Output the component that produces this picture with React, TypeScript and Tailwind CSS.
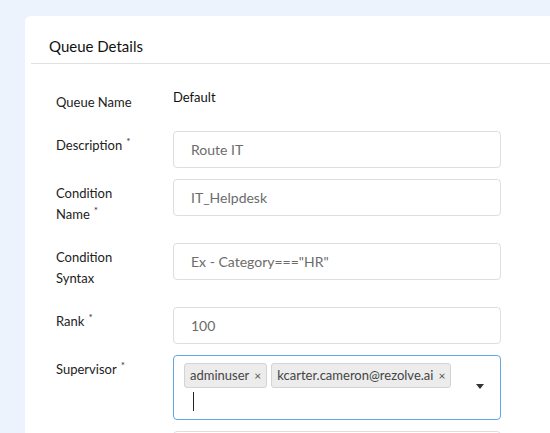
import React from "react";

const font = { fontFamily: "Lato, 'Open Sans', sans-serif" };

function Label({ text, required }: { text: React.ReactNode; required?: boolean }) {
  return (
    <div className="w-[117px] shrink-0 pt-[4px] pb-[7px] text-[13px] leading-[21px] text-[#222]">
      {text}
      {required && <sup className="ml-[4px] text-[10px] text-[#333]">*</sup>}
    </div>
  );
}

function TextBox({ value }: { value: string }) {
  return (
    <div className="flex h-[37px] w-[328px] items-center rounded-[4px] border border-[#dedede] bg-white pl-[17px] text-[14px] text-[#6c6c6c]">
      {value}
    </div>
  );
}

function Tag({ text }: { text: string }) {
  return (
    <span className="flex h-[25px] items-center gap-[5px] rounded-[3px] border border-[#d3d3d3] bg-[#ececec] px-[5px] text-[13px] text-[#444]">
      {text}
      <span className="text-[12px] text-[#555]">×</span>
    </span>
  );
}

export default function App() {
  return (
    <div className="h-[433px] w-[550px] overflow-hidden bg-[#edf3fc] pl-[25px] pt-[16px]" style={font}>
      <div className="w-[560px] rounded-[6px] bg-white pb-10">
        <div className="mx-[6px] border-b border-[#e2e2e2] pb-[6px] pl-[18px] pt-[19px] text-[15px] leading-[22px] text-[#111]">
          Queue Details
        </div>

        <div className="flex flex-col gap-[11px] pl-[31px] pt-[23px]">
          <div className="flex">
            <div className="w-[117px] shrink-0 pt-[5px] pb-[7px] text-[13px] leading-[21px] text-[#222]">
              Queue Name
            </div>
            <div className="text-[13px] leading-[21px] text-[#111]">Default</div>
          </div>

          <div className="flex">
            <Label text="Description" required />
            <TextBox value="Route IT" />
          </div>

          <div className="flex">
            <Label text={<>Condition<br />Name</>} required />
            <TextBox value="IT_Helpdesk" />
          </div>

          <div className="flex">
            <Label text={<>Condition<br />Syntax</>} />
            <TextBox value={'Ex - Category==="HR"'} />
          </div>

          <div className="flex">
            <Label text="Rank" required />
            <TextBox value="100" />
          </div>

          <div className="flex">
            <Label text="Supervisor" required />
            <div className="relative h-[65px] w-[328px] rounded-[4px] border border-[#62a8e6] bg-white pl-[10px] pt-[7px]">
              <div className="flex gap-[4px]">
                <Tag text="adminuser" />
                <Tag text="kcarter.cameron@rezolve.ai" />
              </div>
              <div className="ml-[9px] mt-[4px] h-[19px] w-px bg-[#222]" />
              <div className="absolute right-[16px] top-[28px] h-0 w-0 border-x-[4px] border-t-[5px] border-x-transparent border-t-[#333]" />
            </div>
          </div>

          <div className="flex">
            <div className="w-[117px] shrink-0" />
            <TextBox value="" />
          </div>
        </div>
      </div>
    </div>
  );
}
